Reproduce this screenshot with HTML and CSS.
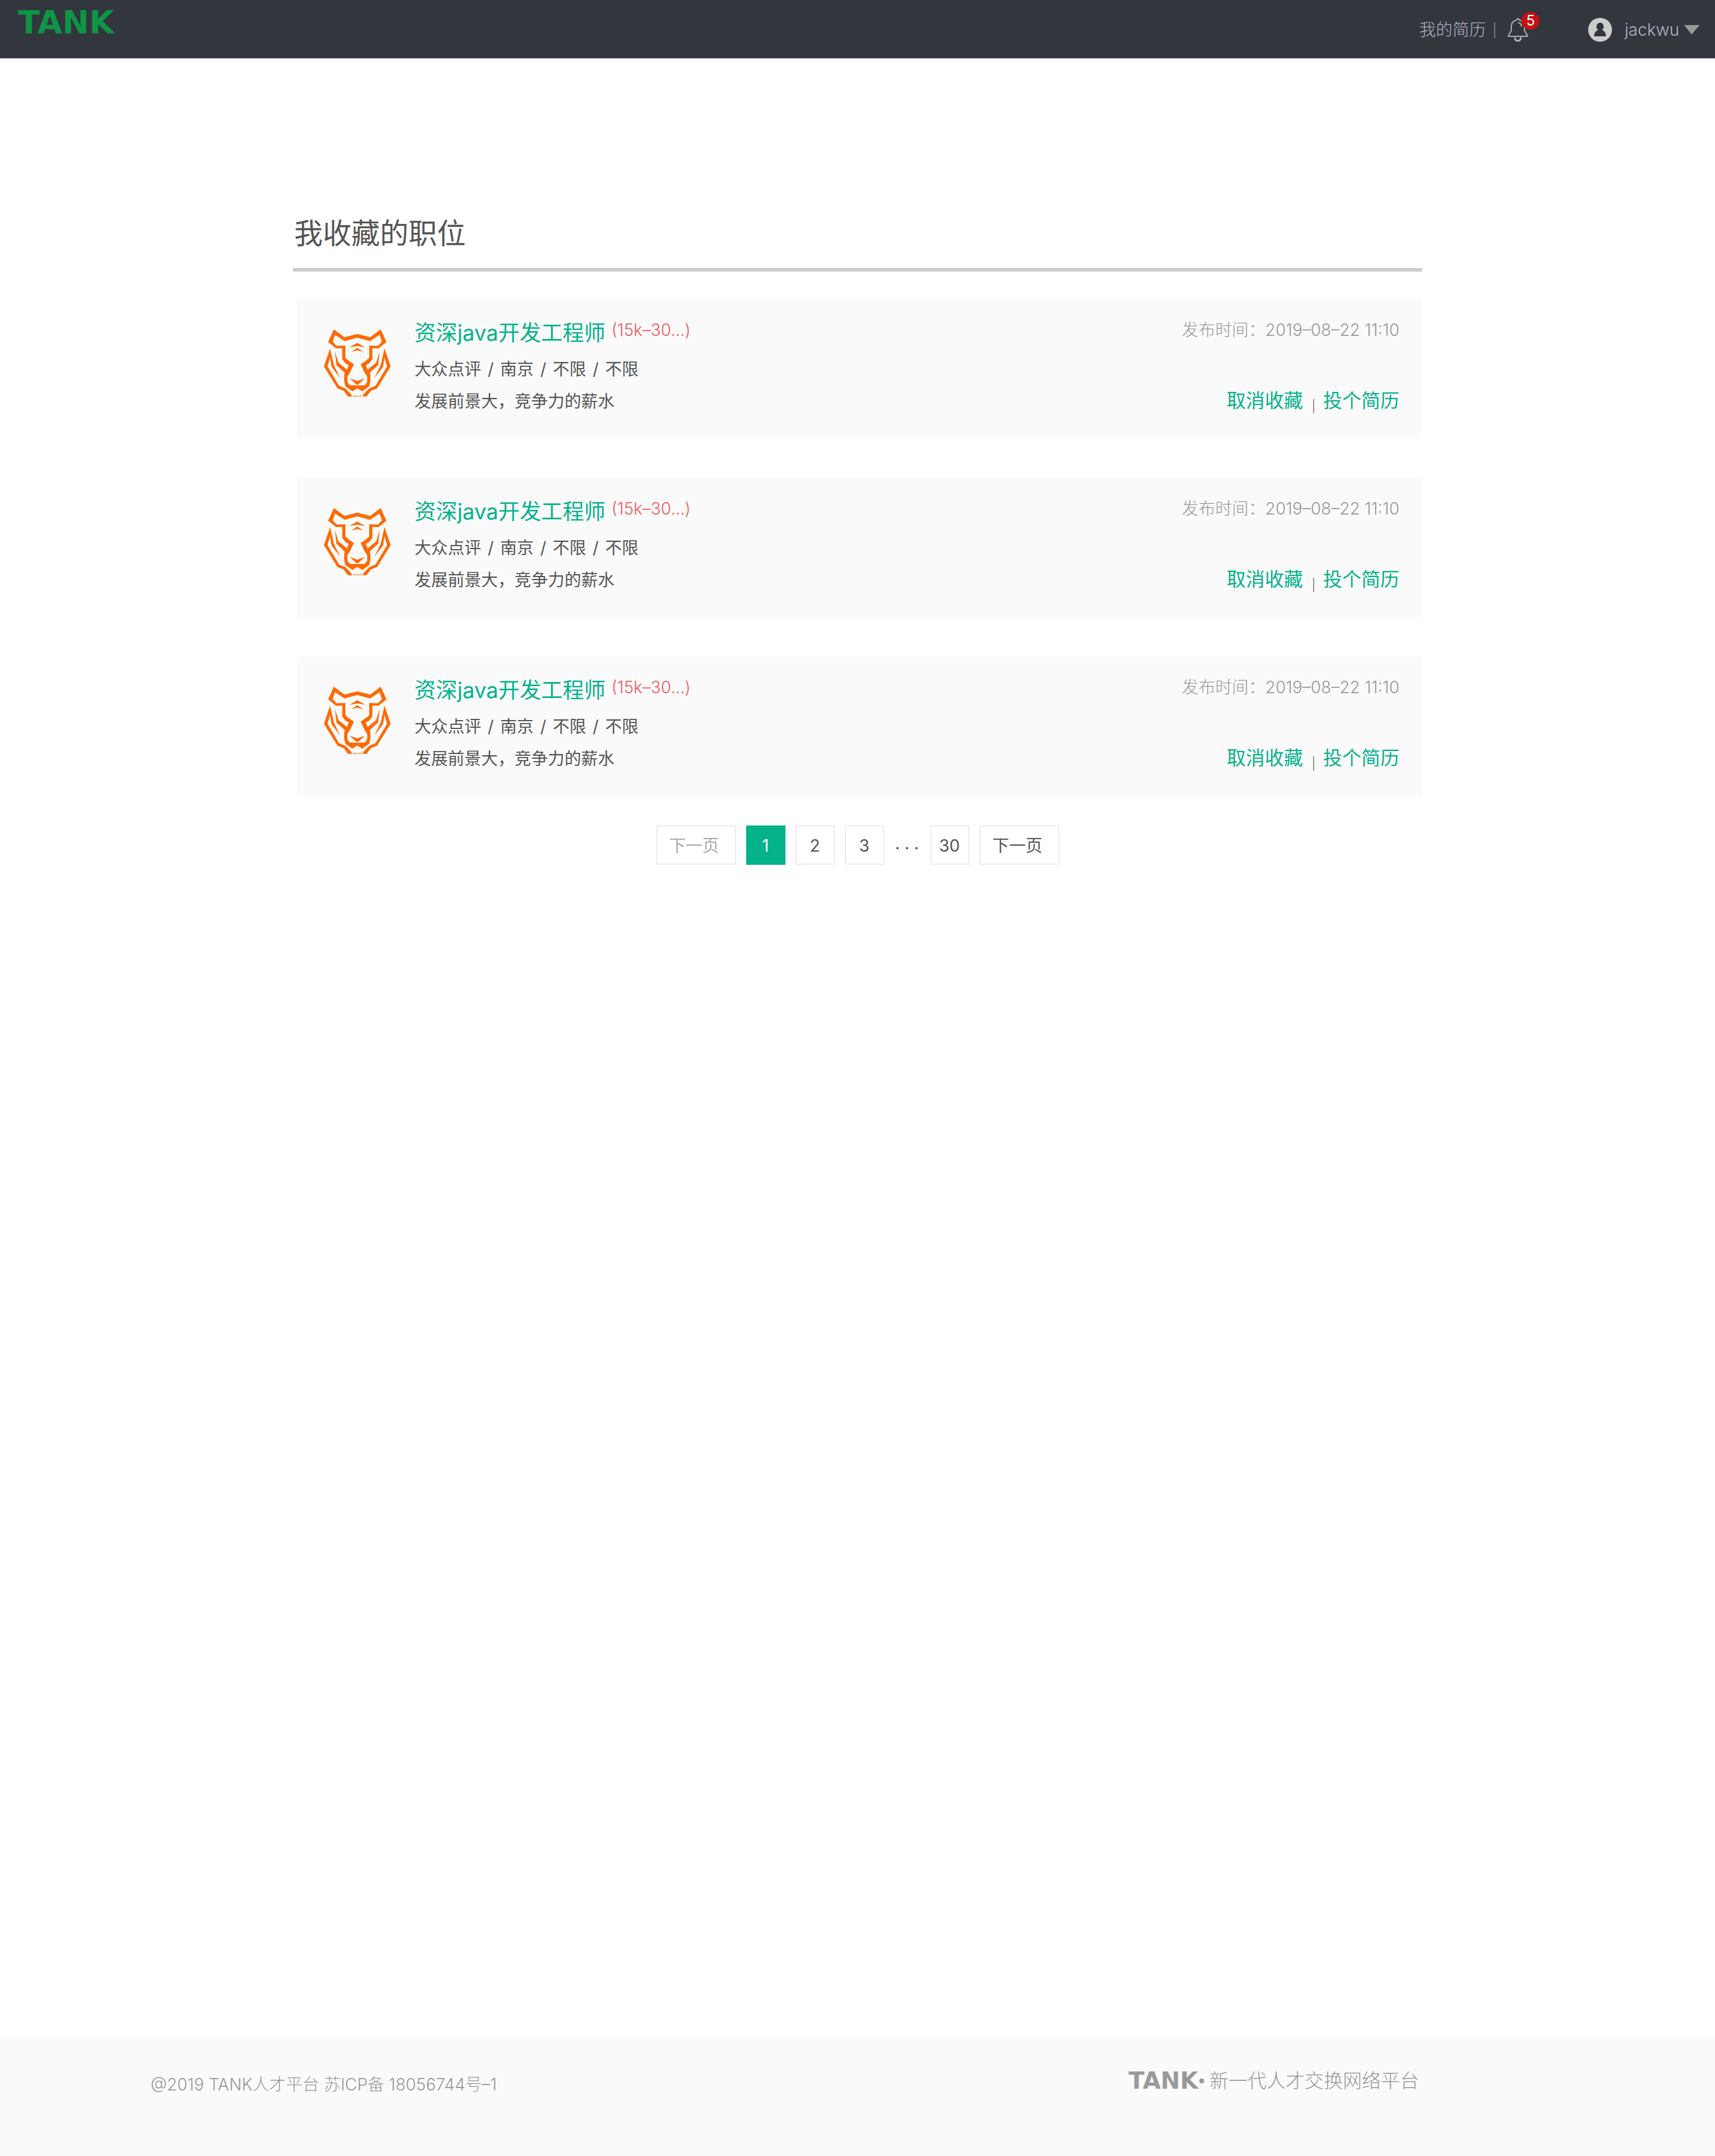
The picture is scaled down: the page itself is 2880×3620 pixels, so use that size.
FILE: index.html
```html
<!DOCTYPE html>
<html lang="zh-CN">
<head>
<meta charset="utf-8">
<title>我收藏的职位 - TANK</title>
<link rel="stylesheet" href="styles.css">
</head>
<body>
<svg class="sprite" aria-hidden="true">
  <symbol id="tiger" viewBox="42 70 336 339">
    <g id="tiger-half">
      <path d="M210 93L145 110L92 70L63 134L103 166L134 165V220L151 242L167 250L158 273L115 238L97 180L105 250L148 290L144 300V332L150 357L185 382L210 367V350L200 343L172 317L210 330V352H192L172 351L160 335V308L172 290L193 246L165 227L150 214V152L106 153L86 132L98 98L146 129L210 112Z"/>
      <path d="M73 166L42 257L110 367L142 380L163 408H184L178 396L150 368L118 354L60 257L73 212L80 258L124 316L92 250Z"/>
      <path d="M210 138L170 161L210 154Z"/>
      <path d="M210 163L180 183L210 176Z"/>
      <path d="M190 398L195 408H190Z"/>
    </g>
    <use href="#tiger-half" transform="matrix(-1 0 0 1 420 0)"/>
    <path d="M193 405H227V408H193Z"/>
  </symbol>
</svg>

<header class="topbar">
  <a class="logo" href="#">TANK</a>
  <nav class="topnav">
    <a class="resume" href="#">我的简历</a>
    <span class="topnav-rule"></span>
    <button class="bell" type="button" aria-label="消息">
      <svg viewBox="0 0 34 40" width="34" height="40" fill="none" stroke="#b0b0b0" stroke-width="2" stroke-linecap="round" stroke-linejoin="round">
        <path d="M17 1L14 4C9 5 6 9 6 15V20C6 25 1 26 1 31H33C33 26 28 25 28 20V15C28 9 25 5 20 4Z"/>
        <path d="M18 8C21 9 23 11 23 14"/>
        <path d="M12 34C13 40 21 40 22 34" stroke-width="3"/>
      </svg>
      <span class="badge">5</span>
    </button>
    <button class="account" type="button">
      <svg viewBox="0 0 40 40" width="40" height="40">
        <circle cx="20" cy="20" r="20" fill="#ccc"/>
        <path d="M20 8A6.500 6.500 0 0 1 23 20C27 22 30 25 30 31H10C10 25 13 22 17 20A6.500 6.500 0 0 1 20 8Z" fill="#32373e"/>
      </svg>
      <span class="account-name">jackwu</span>
      <svg viewBox="0 0 26 16" width="26" height="16"><path d="M0 0H26L13 16Z" fill="#999"/></svg>
    </button>
  </nav>
</header>

<main class="page">
  <h1 class="page-title">我收藏的职位</h1>
  <ul class="jobs">
    <li class="job">
      <svg class="job-logo" role="img" aria-label="公司标志"><use href="#tiger"/></svg>
      <div class="job-main">
        <div class="job-head"><a class="job-name" href="#">资深java开发工程师</a><span class="salary">(15k–30…)</span></div>
        <p class="tags"><span>大众点评</span><span>/</span><span>南京</span><span>/</span><span>不限</span><span>/</span><span>不限</span></p>
        <p class="pitch">发展前景大，竞争力的薪水</p>
      </div>
      <div class="job-side">
        <time class="date">发布时间：2019–08–22 11:10</time>
        <div class="actions"><button type="button">取消收藏</button><span class="actions-rule"></span><button type="button">投个简历</button></div>
      </div>
    </li>
    <li class="job">
      <svg class="job-logo" role="img" aria-label="公司标志"><use href="#tiger"/></svg>
      <div class="job-main">
        <div class="job-head"><a class="job-name" href="#">资深java开发工程师</a><span class="salary">(15k–30…)</span></div>
        <p class="tags"><span>大众点评</span><span>/</span><span>南京</span><span>/</span><span>不限</span><span>/</span><span>不限</span></p>
        <p class="pitch">发展前景大，竞争力的薪水</p>
      </div>
      <div class="job-side">
        <time class="date">发布时间：2019–08–22 11:10</time>
        <div class="actions"><button type="button">取消收藏</button><span class="actions-rule"></span><button type="button">投个简历</button></div>
      </div>
    </li>
    <li class="job">
      <svg class="job-logo" role="img" aria-label="公司标志"><use href="#tiger"/></svg>
      <div class="job-main">
        <div class="job-head"><a class="job-name" href="#">资深java开发工程师</a><span class="salary">(15k–30…)</span></div>
        <p class="tags"><span>大众点评</span><span>/</span><span>南京</span><span>/</span><span>不限</span><span>/</span><span>不限</span></p>
        <p class="pitch">发展前景大，竞争力的薪水</p>
      </div>
      <div class="job-side">
        <time class="date">发布时间：2019–08–22 11:10</time>
        <div class="actions"><button type="button">取消收藏</button><span class="actions-rule"></span><button type="button">投个简历</button></div>
      </div>
    </li>
  </ul>
  <nav class="pager" aria-label="分页">
    <button class="pager-step" type="button" disabled>下一页</button>
    <button class="current" type="button" aria-current="page">1</button>
    <button type="button">2</button>
    <button type="button">3</button>
    <span class="pager-dots">· · ·</span>
    <button type="button">30</button>
    <button class="pager-step" type="button">下一页</button>
  </nav>
</main>

<footer class="footer">
  <p class="copyright">@2019 TANK人才平台 苏ICP备 18056744号–1</p>
  <p class="slogan"><span class="footer-logo">TANK</span><span class="dot"></span><span>新一代人才交换网络平台</span></p>
</footer>
</body>
</html>
```
FILE: styles.css
```css
* {
  box-sizing: border-box;
}

body {
  display: flex;
  flex-direction: column;
  min-height: 100vh;
  margin: 0;
  background: #fff;
  color: #555;
  font: 300 28px/40px Inter, "Noto Sans CJK SC", sans-serif;
}

h1, p, ul {
  margin: 0;
  padding: 0;
  list-style: none;
}

a {
  color: inherit;
  text-decoration: none;
}

button {
  margin: 0;
  padding: 0;
  border: 0;
  background: none;
  color: inherit;
  font: inherit;
  cursor: pointer;
}

svg {
  display: block;
  flex: none;
}

.sprite {
  position: absolute;
  width: 0;
  height: 0;
}

/* Top bar */
.topbar {
  display: flex;
  justify-content: space-between;
  height: 98px;
  padding: 0 26px 0 30px;
  background: #32373e;
  color: #afb3c3;
}

.logo {
  padding-top: 8px;
  color: #0d9645;
  font: bold 54px/60px "DejaVu Sans", sans-serif;
}

.topnav {
  display: flex;
  align-items: center;
  padding-top: 2px;
}

.topnav-rule {
  width: 2px;
  height: 27px;
  margin: 0 21px 0 14px;
  background: #777;
}

.bell {
  position: relative;
}

.badge {
  position: absolute;
  top: -10px;
  left: 23px;
  width: 30px;
  height: 30px;
  border-radius: 50%;
  background: #c80f10;
  color: #fff;
  font-size: 24px;
  font-weight: 400;
  line-height: 30px;
  text-align: center;
}

.account {
  display: flex;
  align-items: center;
  margin-left: 101px;
}

.account-name {
  margin: 0 8px 0 21px;
}

/* Saved jobs */
.page {
  flex: 1;
  width: 100%;
  max-width: 1896px;
  margin: 0 auto;
  padding-top: 264px;
}

.page-title {
  padding: 0 0 28px 2px;
  border-bottom: 6px solid #ccc;
  font-size: 48px;
  font-weight: 400;
  line-height: 60px;
}

.jobs {
  display: grid;
  gap: 66px;
  padding: 46px 0 50px 6px;
  font-weight: 400;
}

.job {
  display: flex;
  min-height: 234px;
  padding: 32px 38px 40px 46px;
  background: #fafafa;
}

.job-logo {
  width: 112px;
  height: 113px;
  margin-top: 19px;
  fill: #ff6900;
}

.job-main {
  flex: 1;
  margin-left: 40px;
}

.job-head {
  display: flex;
  gap: 10px;
  height: 50px;
}

.job-name {
  color: #04b28b;
  font-size: 36px;
  line-height: 50px;
}

.salary {
  color: #f15a5e;
  font-weight: 300;
}

.tags {
  display: flex;
  gap: 11px;
  margin: 16px 0 14px;
}

.job-side {
  display: flex;
  flex-direction: column;
  justify-content: space-between;
  align-items: flex-end;
}

.date {
  color: #999;
  font-weight: 300;
}

.actions {
  display: flex;
  color: #04b28b;
  font-size: 32px;
  line-height: 46px;
}

.actions-rule {
  align-self: flex-end;
  width: 2px;
  height: 24px;
  margin: 0 15px 2px 17px;
  background: #999;
}

/* Pagination */
.pager {
  display: flex;
  justify-content: center;
  gap: 17px;
  font-weight: 400;
}

.pager button {
  width: 66px;
  height: 66px;
  padding-top: 2px;
  border: 2px solid #ededed;
}

.pager .pager-step {
  width: 134px;
  padding-left: 20px;
  text-align: left;
}

.pager button:disabled {
  color: #aaa;
  cursor: default;
}

.pager .current {
  border-color: #04b28b;
  background: #04b28b;
  color: #fff;
}

.pager-dots {
  min-width: 43px;
  padding-top: 18px;
  text-align: center;
}

/* Footer */
.footer {
  display: flex;
  justify-content: space-between;
  height: 200px;
  padding: 51px 497px 0 253px;
  background: #fafafa;
  color: #999;
}

.copyright {
  padding-top: 9px;
}

.slogan {
  display: flex;
  align-items: center;
  height: 46px;
  font-size: 32px;
  line-height: 46px;
}

.footer-logo {
  font: bold 39px/46px "DejaVu Sans", sans-serif;
}

.dot {
  width: 8px;
  height: 8px;
  margin: 0 9px 0 2px;
  border-radius: 50%;
  background: #999;
}
```
